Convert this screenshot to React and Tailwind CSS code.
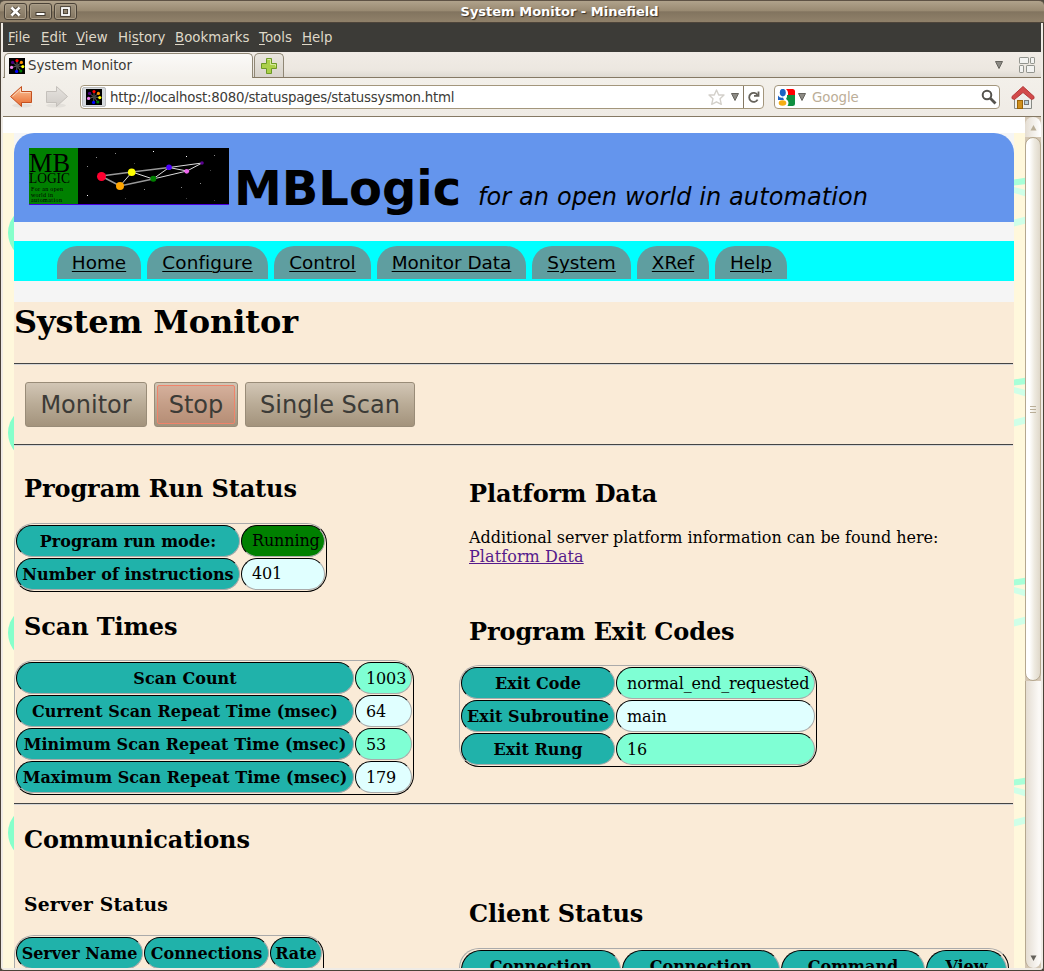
import React from "react";

const SANS = "font-['DejaVu_Sans',sans-serif]";

function Favicon() {
  const dots = [
    [8, 2.6, "#ff0000"], [12.4, 4.4, "#ff9000"], [13.8, 8.6, "#ffff00"], [11.8, 13, "#008000"],
    [7.6, 13.4, "#0000ff"], [2.6, 9.4, "#ee82ee"], [3.6, 4.4, "#4b0082"],
  ];
  return (
    <svg width="16" height="16" viewBox="0 0 16 16" className="shrink-0">
      <rect width="16" height="16" fill="#000" />
      {dots.map(([x, y, c]) => (
        <g key={c}>
          <path d={`M8 8L${x} ${y}`} stroke="#777" strokeWidth="0.8" />
          <circle cx={x} cy={y} r="1.6" fill={c} />
        </g>
      ))}
      <circle cx="8" cy="8" r="1.4" fill="#444" />
    </svg>
  );
}

function WinButton({ children }) {
  return (
    <div className="flex h-[17px] w-[23px] items-center justify-center rounded-[3px] border border-[#4a4237] bg-[linear-gradient(#a19580,#82745f)] shadow-[inset_0_0_0_1px_#aa9d88]">
      <svg width="11" height="11" viewBox="0 0 11 11" fill="none">{children}</svg>
    </div>
  );
}

function TitleBar() {
  return (
    <div className="flex h-[23px] shrink-0 items-center rounded-t-[5px] border-t border-b border-t-[#5e5245] border-b-[#4e453b] bg-[linear-gradient(#b0a28b_0%,#9a8b73_45%,#82745f_52%,#90816a_100%)]">
      <div className="flex w-[78px] gap-[2px] pl-1">
        <WinButton>
          <path d="M2 2L9 9M9 2L2 9" stroke="#443c32" strokeWidth="4.4" />
          <path d="M1.500 1.500L9.500 9.500M9.500 1.500L1.500 9.500" stroke="#fff" strokeWidth="2.6" />
        </WinButton>
        <WinButton><rect x="1" y="6.5" width="9" height="3" fill="#fff" stroke="#443c32" /></WinButton>
        <WinButton>
          <rect x="2" y="2" width="7" height="7" stroke="#443c32" strokeWidth="3.6" />
          <rect x="2" y="2" width="7" height="7" stroke="#fff" strokeWidth="1.8" />
        </WinButton>
      </div>
      <div className="flex-1 pr-[3px] text-center text-[13px] leading-[20px] font-bold whitespace-nowrap text-white [text-shadow:1px_1px_1px_#3a3228]">
        System Monitor - Minefield
      </div>
    </div>
  );
}

function MenuBar() {
  const items = [
    ["w-[33px]", "", "F", "ile"], ["w-[35px]", "", "E", "dit"], ["w-[42px]", "", "V", "iew"],
    ["w-[57px]", "Hi", "s", "tory"], ["w-[84px]", "", "B", "ookmarks"], ["w-[43px]", "", "T", "ools"], ["w-[40px]", "", "H", "elp"],
  ];
  return (
    <div className="flex h-[29px] shrink-0 items-center bg-[#3c3b37] pl-[5px] text-[13.33px] text-[#dfd8c8]">
      {items.map(([w, a, u, b]) => (
        <div key={b} className={w}>{a}<span className="underline underline-offset-2">{u}</span>{b}</div>
      ))}
    </div>
  );
}

function Down({ className = "" }) {
  return (
    <svg width="8" height="8" viewBox="0 0 8 8" className={className}>
      <path d="M.5 .5H7.5L4 7.5Z" fill="#8d8b85" stroke="#66645e" />
    </svg>
  );
}

function TabStrip() {
  return (
    <div className="flex h-[26px] shrink-0 items-stretch bg-[linear-gradient(#f1ece6,#ece7e0_70%,#dcd8d0)] shadow-[inset_0_-1px_0_#857964]">
      <div className="mt-px ml-px flex w-[249px] items-center gap-[3px] rounded-t-[5px] border border-b-0 border-[#8f8775] bg-[linear-gradient(#fbfaf8,#f3f0ea)] pl-[4px] text-[13.33px] tracking-[-0.05px] text-[#3c3b37]">
        <Favicon />
        <span>System Monitor</span>
      </div>
      <div className="mt-px ml-px mb-px flex w-[30px] items-center justify-center rounded-t-[5px] border border-b-0 border-[#8f8775] bg-[linear-gradient(#eae6df,#d8d3cb)]">
        <svg width="18" height="18" viewBox="0 0 18 18">
          <path d="M6.5 1.5h5v5h5v5h-5v5h-5v-5h-5v-5h5Z" fill="#abd04a" stroke="#6d9926" />
          <path d="M7.5 2.5h3v5h5v2" fill="none" stroke="#d5eb9d" />
        </svg>
      </div>
      <div className="flex-1" />
      <Down className="mt-[9px] mr-[16px]" />
      <svg width="17" height="17" viewBox="0 0 17 17" className="mt-[5px] mr-[5px]" fill="#f3f3f1" stroke="#92948e">
        <rect x=".5" y=".5" width="9" height="6" rx=".6" /><rect x="11.5" y=".5" width="4" height="6" rx=".6" />
        <rect x=".5" y="8.500" width="4" height="7" rx=".6" /><rect x="7.500" y="8.500" width="8" height="7" rx=".6" />
      </svg>
    </div>
  );
}

function Arrow({ fwd }) {
  return (
    <svg width="24" height="24" viewBox="0 0 24 24" className={fwd ? "-scale-x-100" : ""}>
      <defs>
        <linearGradient id={fwd ? "fw" : "bk"} x1="0" y1="0" x2="0" y2="1">
          <stop offset="0" stopColor={fwd ? "#e6e3df" : "#fbc9a0"} />
          <stop offset="1" stopColor={fwd ? "#cfcbc6" : "#e8672a"} />
        </linearGradient>
      </defs>
      <ellipse cx="13" cy="20.500" rx="10" ry="2" fill="#000" opacity=".05" />
      <path d="M1.500 11.500L12.500 1.500V6.500H22.500V17.500H12.500V21.500Z" fill={fwd ? "url(#fw)" : "url(#bk)"} stroke={fwd ? "#c4c0bb" : "#c4501f"} strokeLinejoin="round" />
      {!fwd && <path d="M3.500 11.500L11.500 4V7.500H21.500" fill="none" stroke="#fde0c8" opacity=".8" />}
    </svg>
  );
}

function Toolbar() {
  return (
    <div className="flex h-[39px] shrink-0 items-center border-b border-[#857964] bg-[linear-gradient(#f3f0ea,#efebe5)] pl-[6px]">
      <Arrow />
      <div className="ml-[12px]"><Arrow fwd /></div>
      <div className="ml-[11px] flex h-[24px] w-[684px] items-center rounded-[4px] border border-[#a3967c] bg-white text-[13.33px] text-[#3c3b37]">
        <div className="ml-px flex h-5 w-[24px] items-center justify-center rounded-[2px] border border-[#bbb] bg-[#d5d9dd]"><Favicon /></div>
        <span className="ml-[4px] flex-1 pt-px tracking-[-0.235px]">http://localhost:8080/statuspages/statussysmon.html</span>
        <svg width="17" height="17" viewBox="0 0 17 17" className="mr-[6px]">
          <path d="M8.500 1L10.700 6H16L12 9.700L13.300 15.300L8.500 12.800L3.700 15.300L5 9.700L1 6H6.300Z" fill="#fff" stroke="#d3d0ca" strokeWidth="1.4" strokeLinejoin="round" />
        </svg>
        <Down className="mr-[4px]" />
        <div className="flex h-full w-[20px] items-center justify-center border-l border-[#857964]">
          <svg width="14" height="14" viewBox="0 0 14 14" fill="none" stroke="#65625b">
            <path d="M10.500 5A4.500 4.500 0 1 0 10.600 9.600" strokeWidth="1.800" />
            <path d="M7 5.800H11.500V1.500" strokeWidth="1.800" />
          </svg>
        </div>
      </div>
      <div className="ml-[10px] flex h-[24px] w-[226px] items-center rounded-[4px] border border-[#a3967c] bg-white text-[13.33px] text-[#bcae98]">
        <svg width="17" height="17" viewBox="0 0 17 17" className="ml-[3px]">
          <path d="M8 0H14.500Q17 0 17 2.500V6H10Q10.500 2 8 0Z" fill="#f00" />
          <path d="M9 6H17V14.500Q17 17 14.500 17H9.500Q12 13 8.500 10.500Q7.500 9.500 9 8Z" fill="#109040" />
          <ellipse cx="4.800" cy="3.600" rx="3" ry="3.800" fill="#1c62c4" />
          <path d="M0 6.500Q2 9.500 5 8.500L6 11H0Z" fill="#1c62c4" />
          <ellipse cx="4.500" cy="14" rx="3.800" ry="2.700" fill="#f5ae13" />
        </svg>
        <Down className="ml-[3px]" />
        <span className="ml-[6px] flex-1 pt-px tracking-[-0.05px]">Google</span>
        <svg width="16" height="16" viewBox="0 0 16 16" fill="none" stroke="#55534e" className="mr-[2px]">
          <circle cx="6" cy="6" r="4.300" strokeWidth="2" /><path d="M9.300 9.300L14.500 14.500" strokeWidth="2.800" />
        </svg>
      </div>
      <svg width="24" height="25" viewBox="0 0 24 25" className="ml-[11px]">
        <path d="M3.500 12L12 5L20.500 12V23.500H3.500Z" fill="#eeeeea" stroke="#888a85" />
        <path d="M1 13.500V11.500L12 1.500L23 11.500V13.500L20.500 14.500L12 7.500L3.500 14.500Z" fill="#d24a4a" stroke="#b33a3a" strokeLinejoin="round" />
        <rect x="6.500" y="15.500" width="5" height="8" fill="#cf8f1d" stroke="#9a6408" />
        <rect x="13.500" y="15.500" width="4" height="4" fill="#b8cfd8" stroke="#777" />
      </svg>
    </div>
  );
}

function Scrollbar() {
  return (
    <div className="flex w-[16px] shrink-0 flex-col bg-[#d3c6b3]">
      <div className="flex h-[20px] items-center justify-center rounded-t-[8px] bg-[linear-gradient(90deg,#e4ddd2,#fff)]">
        <svg width="7" height="7" viewBox="0 0 7 7"><path d="M3.500 1L6.500 6.500H.5Z" fill="#b9ae98" /></svg>
      </div>
      <div className="flex h-[544px] flex-col items-center justify-center gap-[2px] rounded-[8px] border border-[#b5a88f] bg-[linear-gradient(90deg,#fff_25%,#eeeae0_60%,#dfd8ca)]">
        <div className="h-px w-[6px] bg-[#b9ae98]" /><div className="h-px w-[6px] bg-[#b9ae98]" /><div className="h-px w-[6px] bg-[#b9ae98]" />
      </div>
      <div className="flex flex-1 items-end justify-center rounded-b-[8px] border-l border-[#b5a88f] bg-[linear-gradient(90deg,#e4ddd2,#fbf9f6_85%)] pb-[6px]">
        <svg width="7" height="7" viewBox="0 0 7 7"><path d="M.5 .5H6.500L3.500 6Z" fill="#65625b" /></svg>
      </div>
    </div>
  );
}

function Pattern() {
  return (
    <svg width="1022" height="835" className="absolute inset-0">
      {[0, 200, 400, 600].map((y) => (
        <g key={y} transform={`translate(-3 ${y - 133})`}>
          <circle cx="36" cy="233" r="28" fill="#86ffcb" />
          <path d="M1014 179.500L1026 177.500V184L1014 185.500Z" fill="#a8ffd8" />
          <path d="M1014 187L1026 190V196.500L1014 193Z" fill="#cfffe8" />
          <path d="M1014 219.500L1026 216.500V223.500L1014 226.500Z" fill="#cfffe8" />
        </g>
      ))}
    </svg>
  );
}

function Logo() {
  return (
    <svg width="200" height="57" viewBox="0 0 200 57" className="mt-[15px] ml-[15px] shrink-0">
      <rect width="200" height="57" />
      <rect width="49" height="56" fill="#008000" />
      <rect y="56" width="200" height="1" fill="#4b00e0" />
      <g fontFamily="Liberation Serif, serif" fill="#000">
        <text x="0" y="23.500" fontSize="27" textLength="41" lengthAdjust="spacingAndGlyphs">MB</text>
        <text x="0" y="35" fontSize="14" textLength="41" lengthAdjust="spacingAndGlyphs">LOGIC</text>
        <text x="2" y="42.500" fontSize="6" textLength="32">For an open</text>
        <text x="2" y="48.500" fontSize="6" textLength="22">world in</text>
        <text x="2" y="54" fontSize="6" textLength="31">automation</text>
      </g>
      {[[58, 18], [67, 9], [86, 5], [124, 3], [157, 8], [185, 7], [58, 47], [115, 41], [152, 39], [171, 35], [181, 22], [105, 15], [185, 52], [157, 50], [96, 50]].map(([x, y], i) => (
        <rect key={x + "-" + y} x={x} y={y} width="1" height="1" fill={[3, 4, 6].includes(i) ? "#fff" : i < 10 ? "#888" : "#444"} />
      ))}
      <g fill="none">
        <path d="M72 28L103 24L140 19.500M72 28L91 38L124 31" stroke="#999" strokeWidth="1.600" />
        <path d="M140 19.500L173 15L158 23L140 19.500L124 31L103 24L91 38M124 31L158 23" stroke="#ddd" />
      </g>
      <circle cx="72.500" cy="28.500" r="4.500" fill="#ff0030" />
      <circle cx="102.700" cy="24.300" r="3.800" fill="#ff0" />
      <circle cx="91" cy="38" r="4" fill="#ffa500" />
      <circle cx="124.300" cy="30.700" r="3" fill="#008000" />
      <circle cx="140" cy="19.300" r="2.800" fill="#4b00ff" />
      <circle cx="157.700" cy="23.300" r="2.400" fill="#ee66ee" />
      <circle cx="173" cy="15" r="1.800" fill="#5a0090" />
    </svg>
  );
}

function Nav() {
  const tabs = [
    ["Home", "w-[84px]"], ["Configure", "w-[121px] tracking-[0.15px]"], ["Control", "w-[97px]"], ["Monitor Data", "w-[149px]"],
    ["System", "w-[99px]"], ["XRef", "w-[72px]"], ["Help", "w-[72px]"],
  ];
  return (
    <div className={`mt-[19px] flex h-[40px] gap-[6px] bg-[#00ffff] pt-[5px] pl-[43px] text-[18.4px] ${SANS}`}>
      {tabs.map(([t, w]) => (
        <div key={t} className={`h-[33px] rounded-t-[20px] bg-[#5f9ea0] text-center leading-[33px] whitespace-nowrap underline decoration-1 underline-offset-2 ${w}`}>{t}</div>
      ))}
    </div>
  );
}

function Rule() {
  return <div className="mr-px h-[2px] border-t border-b border-t-[#444] border-b-[#d6d6d6]" />;
}

function PushButton({ children, className, hot }) {
  return (
    <div className={`h-[45px] rounded-[3px] border border-[#998c78] bg-[linear-gradient(#d2c6b5,#b9ab96_50%,#a3937c)] p-[2px] text-[24px] text-[#3c3b37] ${className}`}>
      <div className={`h-[39px] rounded-[2px] border text-center leading-[39px] whitespace-nowrap ${hot ? "border-[#f0836a] bg-[#e8785a]/25" : "border-transparent"}`}>{children}</div>
    </div>
  );
}

function H2({ children, className }) {
  return <h2 className={`h-[28px] pl-[10px] text-[24px] leading-[28px] font-bold tracking-[-0.1px] whitespace-nowrap ${className}`}>{children}</h2>;
}

const cell = "h-[32px] shrink-0 rounded-[16px] border border-t-black border-l-black border-r-[#aaa] border-b-[#aaa] whitespace-nowrap";

function Frame({ children, className = "" }) {
  return (
    <div className={`flex w-max flex-col gap-px rounded-[20px] border border-t-[#aaa] border-l-[#aaa] border-r-black border-b-black p-px ${className}`}>{children}</div>
  );
}

function DataTable({ rows, head, body, line = "leading-[32px]" }) {
  return (
    <Frame>
      {rows.map(([k, v, c]) => (
        <div key={k} className="flex gap-px">
          <div className={`${cell} ${head} bg-[#20b2aa] text-center leading-[32px] font-bold tracking-[0.04px]`}>{k}</div>
          <div className={`${cell} ${body} ${c} ${line} pl-[10px] tracking-[-0.13px]`}>{v}</div>
        </div>
      ))}
    </Frame>
  );
}

const AQUA = "bg-[#7fffd4]";
const CYAN = "bg-[#e0ffff]";

function Page() {
  return (
    <div className="relative mt-[16px] h-[835px] bg-[#fff8dc] pl-[11px] font-['DejaVu_Serif',serif] text-[16px] text-black">
      <Pattern />
      <div className="relative h-full w-[1000px] overflow-hidden bg-[#faebd7]">
        <div className="h-[169px] bg-[#f5f5f5]">
          <div className={`flex h-[89px] rounded-t-[20px] bg-[#6495ed] ${SANS}`}>
            <Logo />
            <div className="ml-[5px] flex items-baseline pt-[26px] whitespace-nowrap">
              <span className="w-[244px] text-[48px] leading-[58px] font-bold">MBLogic</span>
              <span className="text-[24px] tracking-[0.1px] italic">for an open world in automation</span>
            </div>
          </div>
          <Nav />
        </div>
        <h1 className="h-[61px] text-[32px] leading-[40px] font-bold tracking-[-0.07px]">System Monitor</h1>
        <Rule />
        <div className={`flex h-[79px] gap-[7px] pt-[17px] pl-[11px] ${SANS}`}>
          <PushButton className="w-[122px]">Monitor</PushButton>
          <PushButton className="w-[84px]" hot>Stop</PushButton>
          <PushButton className="w-[170px]">Single Scan</PushButton>
        </div>
        <Rule />
        <div className="flex h-[357px]">
          <div className="w-[445px] shrink-0">
            <H2 className="mt-[29px] mb-[20px]">Program Run Status</H2>
            <DataTable line="leading-[30px]" head="w-[224px]" body="w-[84px]" rows={[["Program run mode:", "Running", "bg-[#008000]"], ["Number of instructions", "401", CYAN]]} />
            <H2 className="mt-[21px] mb-[19px]">Scan Times</H2>
            <DataTable head="w-[338px]" body="w-[57px]" rows={[
              ["Scan Count", "1003", AQUA], ["Current Scan Repeat Time (msec)", "64", CYAN],
              ["Minimum Scan Repeat Time (msec)", "53", AQUA], ["Maximum Scan Repeat Time (msec)", "179", CYAN],
            ]} />
          </div>
          <div>
            <H2 className="mt-[34px] mb-[20px]">Platform Data</H2>
            <p className="h-[38px] pl-[10px] leading-[19px] tracking-[-0.05px]">
              Additional server platform information can be found here:<br />
              <a className="tracking-[0.08px] text-[#551a8b] underline">Platform Data</a>
            </p>
            <H2 className="mt-[52px] mb-[19px]">Program Exit Codes</H2>
            <DataTable head="w-[154px]" body="w-[199px]" rows={[["Exit Code", "normal_end_requested", AQUA], ["Exit Subroutine", "main", CYAN], ["Exit Rung", "16", AQUA]]} />
          </div>
        </div>
        <Rule />
        <H2 className="mt-[21px]">Communications</H2>
        <div className="flex">
          <div className="w-[445px] shrink-0">
            <h3 className="mt-[39px] mb-[20px] h-[22px] pl-[10px] text-[18.72px] leading-[22px] font-bold tracking-[0.2px]">Server Status</h3>
            <Frame className="h-[60px]">
              <div className="flex gap-px text-center leading-[32px] font-bold">
                <div className={`${cell} w-[127px] bg-[#20b2aa]`}>Server Name</div>
                <div className={`${cell} w-[125px] bg-[#20b2aa]`}>Connections</div>
                <div className={`${cell} w-[52px] bg-[#20b2aa]`}>Rate</div>
              </div>
            </Frame>
          </div>
          <div>
            <H2 className="mt-[46px] mb-[20px]">Client Status</H2>
            <Frame>
              <div className="flex gap-px text-center leading-[31px] font-bold [&>div]:h-[51px] [&>div]:rounded-[20px] [&>div]:bg-[#20b2aa]">
                <div className={`${cell} w-[160px]`}>Connection</div>
                <div className={`${cell} w-[158px]`}>Connection</div>
                <div className={`${cell} w-[144px]`}>Command</div>
                <div className={`${cell} w-[81px]`}>View</div>
              </div>
            </Frame>
          </div>
        </div>
      </div>
    </div>
  );
}

export default function App() {
  return (
    <div className={`flex h-[971px] w-[1044px] flex-col overflow-hidden bg-[#4e4a3f] ${SANS}`}>
      <TitleBar />
      <div className="flex h-[948px] flex-col overflow-hidden rounded-b-[4px] border-r border-b border-l border-[#4a4237] bg-[#efebe5] pr-[2px] pb-[2px] pl-[2px]">
        <MenuBar />
        <TabStrip />
        <Toolbar />
        <div className="flex h-[851px] overflow-hidden bg-white">
          <div className="w-[1022px] shrink-0">
            <Page />
          </div>
          <Scrollbar />
        </div>
      </div>
    </div>
  );
}
